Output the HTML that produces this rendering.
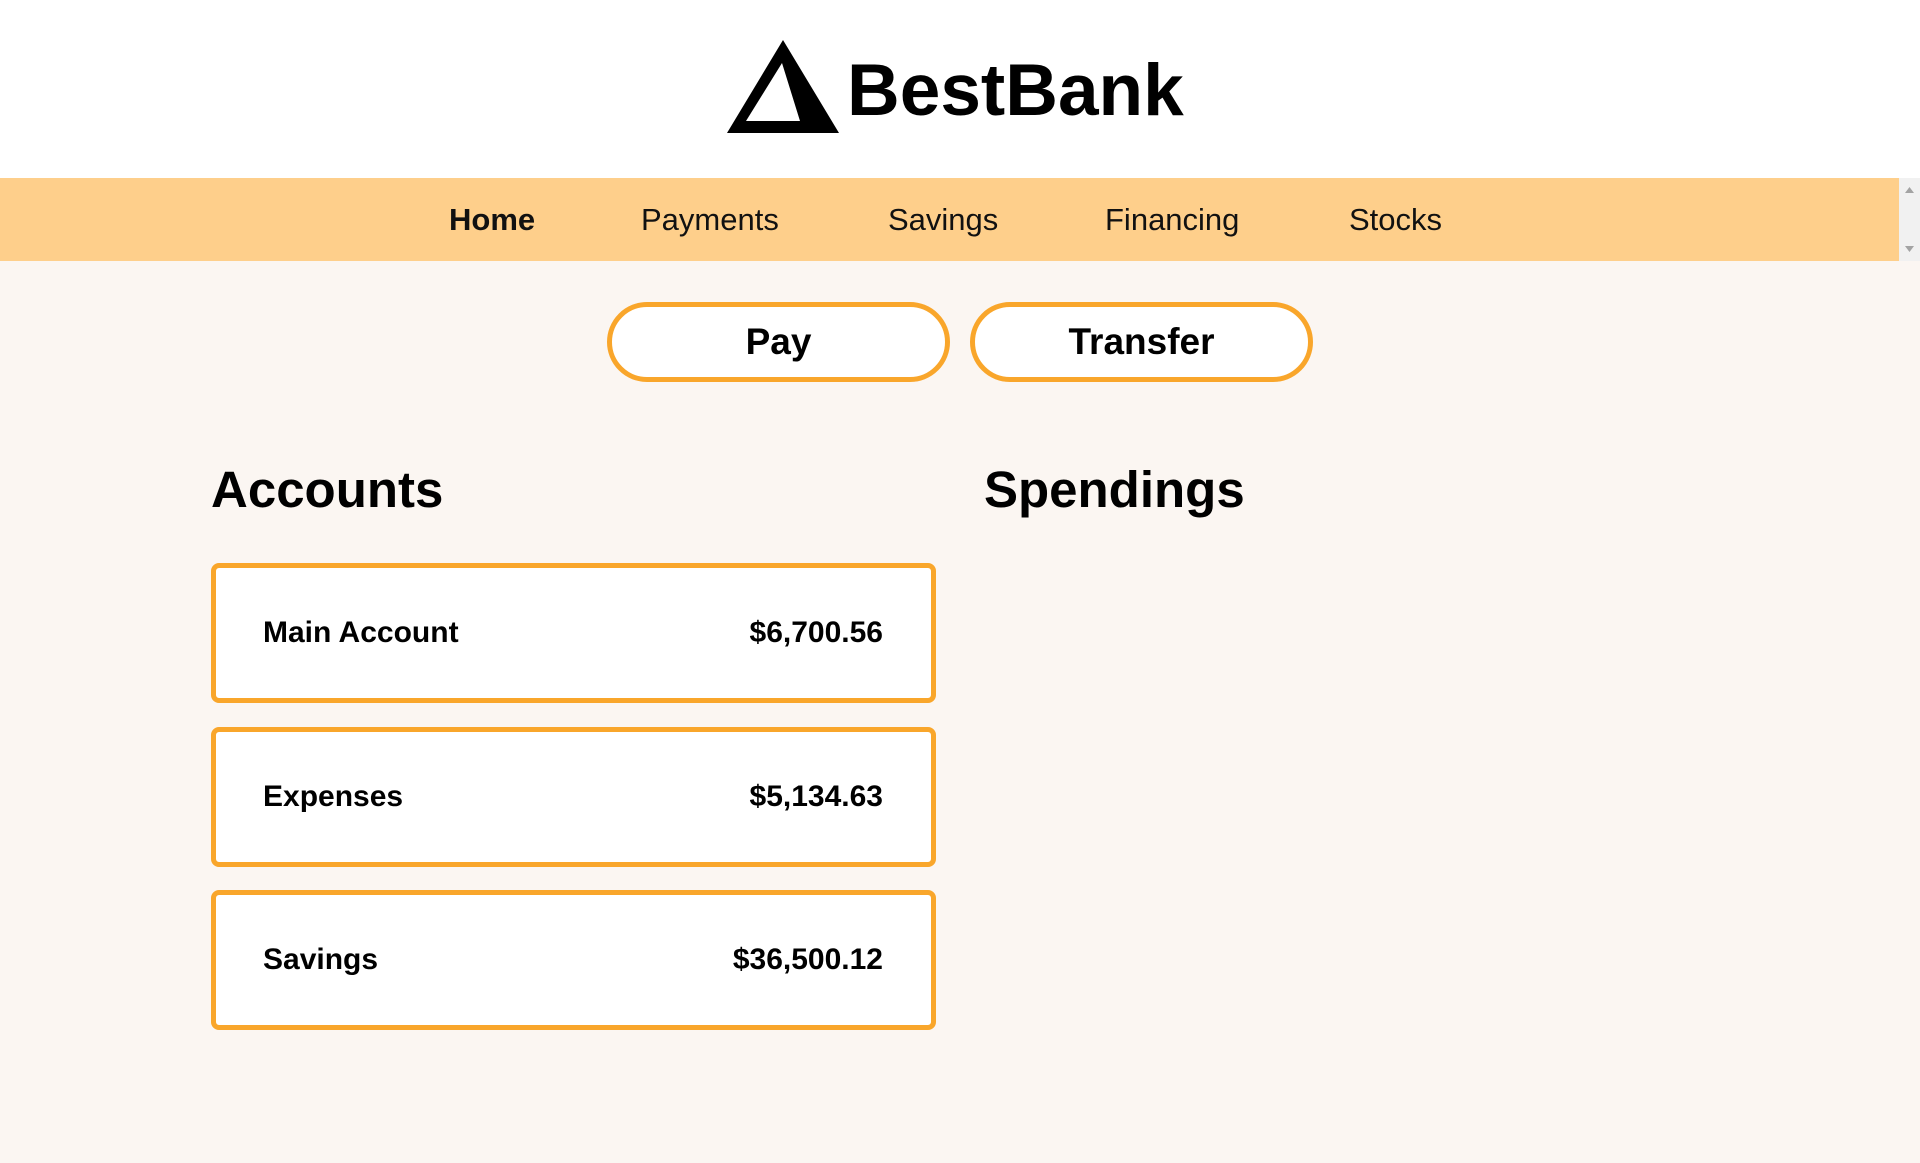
<!DOCTYPE html>
<html><head><meta charset="utf-8"><style>
*{margin:0;padding:0;box-sizing:border-box}
body{width:1920px;height:1163px;background:#fbf6f2;font-family:"Liberation Sans",Arial,sans-serif;color:#000;position:relative;overflow:hidden}
.header{position:absolute;left:0;top:0;width:1920px;height:178px;background:#fff}
.logo{position:absolute;left:847px;top:51px;font-size:73px;line-height:80px;font-weight:bold;letter-spacing:0}
.nav{position:absolute;left:0;top:178px;width:1899px;height:83px;background:#fecf8b}
.sb{position:absolute;left:1899px;top:178px;width:21px;height:83px;background:#f1f1f1}
.nav a{position:absolute;top:0;line-height:83px;font-size:31px;color:#111;text-decoration:none}
.btn{position:absolute;top:302px;height:80px;border:5px solid #f9a62b;border-radius:40px;background:#fff;font-size:37px;font-weight:bold;text-align:center;line-height:70px}
h2{position:absolute;font-size:51px;font-weight:bold;top:460px}
.card{position:absolute;left:211px;width:725px;height:140px;border:5px solid #f9a62b;border-radius:8px;background:#fff;font-size:30px;font-weight:bold}
.card span{position:absolute;top:0;line-height:130px}
.card .l{left:47px}.card .r{right:48px}
</style></head><body>
<div class="header">
<svg style="position:absolute;left:727px;top:40px" width="112" height="93" viewBox="0 0 112 93"><path fill-rule="evenodd" d="M56 0L112 93H0Z M55 23L19 81H73Z" fill="#000"/></svg>
<div class="logo">BestBank</div>
</div>
<div class="nav">
<a style="left:449px;font-weight:bold">Home</a>
<a style="left:641px">Payments</a>
<a style="left:888px">Savings</a>
<a style="left:1105px">Financing</a>
<a style="left:1349px">Stocks</a>
</div>
<div class="sb"><svg width="21" height="83"><path d="M6 15h9l-4.5-6z M6 68h9l-4.5 6z" fill="#a3a3a3"/></svg></div>
<div class="btn" style="left:607px;width:343px">Pay</div>
<div class="btn" style="left:970px;width:343px">Transfer</div>
<h2 style="left:211px">Accounts</h2>
<h2 style="left:984px">Spendings</h2>
<div class="card" style="top:563px"><span class="l">Main Account</span><span class="r">$6,700.56</span></div>
<div class="card" style="top:727px"><span class="l">Expenses</span><span class="r">$5,134.63</span></div>
<div class="card" style="top:890px"><span class="l">Savings</span><span class="r">$36,500.12</span></div>
</body></html>
